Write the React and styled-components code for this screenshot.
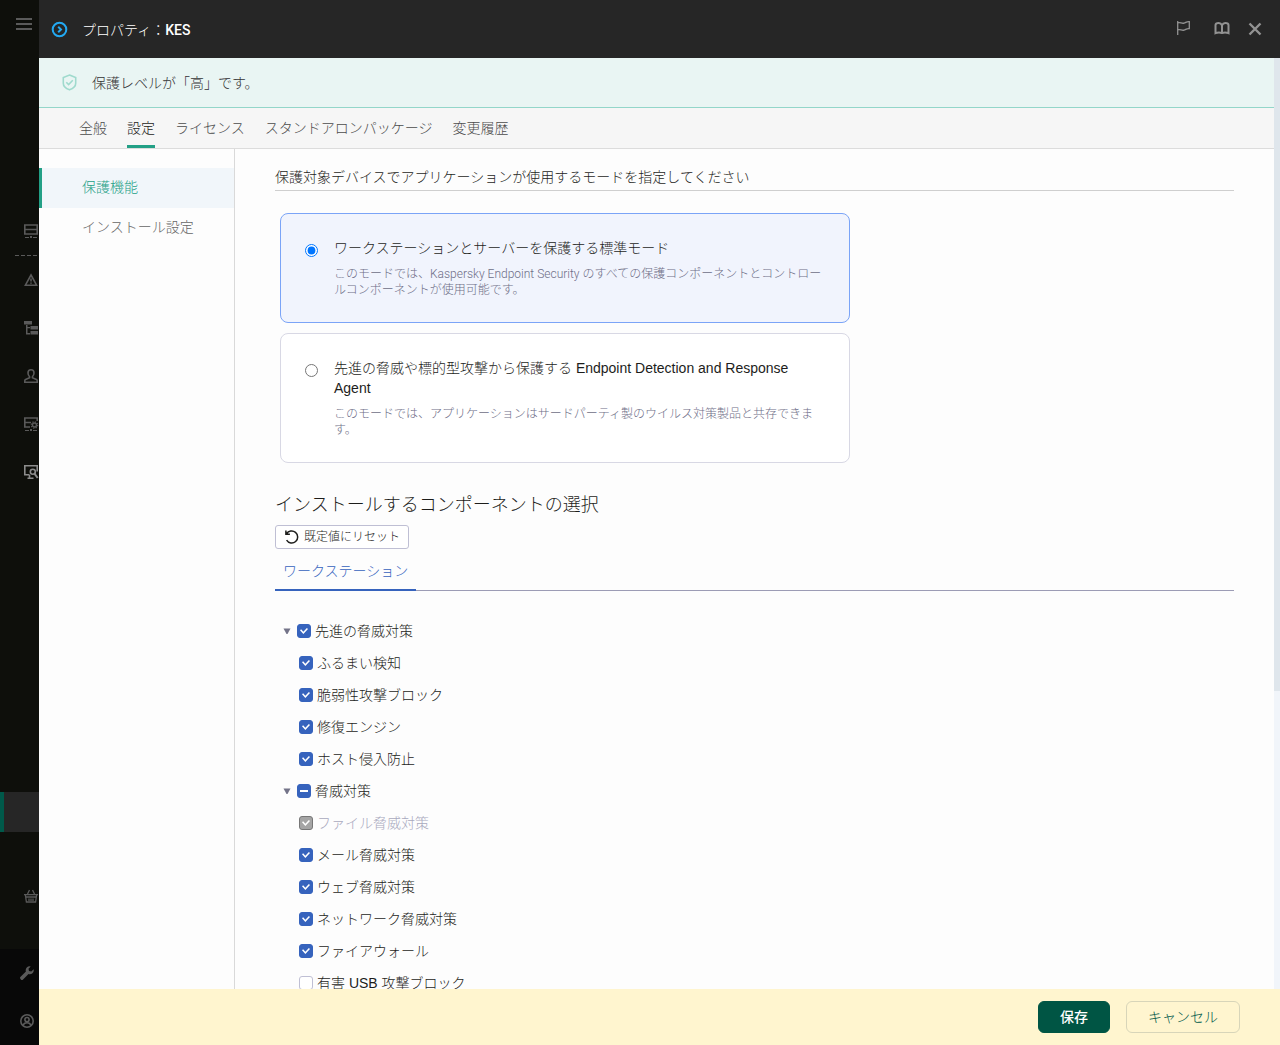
import React, { useEffect, useRef } from 'react';
import styled, { createGlobalStyle, css } from 'styled-components';

const GlobalStyle = createGlobalStyle`
  *, *::before, *::after { box-sizing: border-box; }
  body {
    margin: 0;
    font-family: "Liberation Sans", "Noto Sans CJK JP", sans-serif;
    font-size: 14px;
    font-weight: 300;
    line-height: 20px;
    color: #1d1d1b;
    background: #0d0e0a;
  }
  button, input { font: inherit; margin: 0; }
  h1, h2, p, ul, fieldset { margin: 0; padding: 0; border: 0; font-weight: inherit; }
  ul { list-style: none; }
`;

const Shell = styled.div`
  display: flex;
  height: 100vh;
  overflow: hidden;
`;

const Rail = styled.nav`
  flex: 0 0 39px;
  display: flex;
  flex-direction: column;
  overflow: hidden;
  background: #0e0f0b;
`;

const RailButton = styled.button`
  flex: 0 0 48px;
  display: flex;
  align-items: center;
  padding: 0 0 0 ${(p) => p.$inset || 23}px;
  border: 0;
  background: none;
  color: ${(p) => (p.$bright ? '#8c8c8c' : '#5a5a5a')};
  svg { flex: none; }
`;

const RailGroup = styled.div`
  display: flex;
  flex-direction: column;
  margin-top: ${(p) => p.$top || 0}px;
`;

const Dashes = styled.div`
  height: 1px;
  margin-left: 15px;
  background: repeating-linear-gradient(90deg, #5a5a5a 0 4px, transparent 4px 6px);
`;

const RailActive = styled.div`
  height: 40px;
  margin: 296px 0 40px;
  border-left: 4px solid #00594a;
  background: #262626;
`;

const RailFooter = styled.div`
  display: flex;
  flex-direction: column;
  margin-top: auto;
  background: #080808;
`;

const Panel = styled.div`
  flex: 1;
  min-width: 0;
  display: flex;
  flex-direction: column;
  background: #fdfdfd;
`;

const Header = styled.header`
  flex: 0 0 58px;
  display: flex;
  align-items: center;
  padding: 0 16px 0 12px;
  background: #262626;
  color: #fff;
`;

const Title = styled.h1`
  flex: 1;
  margin-left: 14px;
  padding-top: 2px;
  font-family: Roboto, "Noto Sans CJK JP", sans-serif;
  font-size: 14px;
  font-weight: 300;
  b { font-weight: 500; }
`;

const HeaderActions = styled.div`
  display: flex;
  align-items: center;
  gap: 16px;
`;

const HeaderButton = styled.button`
  display: flex;
  padding: 0;
  border: 0;
  background: none;
  color: #929292;
  &:first-child { margin-right: 7px; }
`;

const Body = styled.div`
  flex: 1;
  min-height: 0;
  display: flex;
`;

const Scroll = styled.div`
  flex: 1;
  min-width: 0;
  overflow-y: auto;
  scrollbar-width: none;
  display: flex;
  flex-direction: column;
`;

const Track = styled.div`
  flex: 0 0 6px;
  background: #f1f5fa;
`;

const Thumb = styled.div`
  height: 68%;
  background: #dfe6ec;
`;

const Banner = styled.div`
  flex: 0 0 50px;
  display: flex;
  align-items: center;
  gap: 14px;
  padding-left: 22px;
  border-bottom: 1px solid #93d6c9;
  background: #e9f5f3;
  color: #333;
`;

const Tabs = styled.div`
  flex: 0 0 41px;
  display: flex;
  gap: 20px;
  padding-left: 40px;
  border-bottom: 1px solid #dcdcdc;
  background: #f6f6f6;
`;

const Tab = styled.button`
  padding: 0;
  border: 0;
  border-bottom: 3px solid ${(p) => (p.$active ? '#23a086' : 'transparent')};
  border-top: 3px solid transparent;
  background: none;
  color: ${(p) => (p.$active ? '#1d1d1b' : '#4c4c4c')};
`;

const Columns = styled.div`
  flex: 1 0 auto;
  display: flex;
`;

const SideNav = styled.nav`
  flex: 0 0 196px;
  padding-top: 19px;
  border-right: 1px solid #d9d9d9;
`;

const SideLink = styled.a`
  display: block;
  padding: 9px 0 11px 40px;
  border-left: 3px solid transparent;
  color: #666;
  text-decoration: none;
  ${(p) => p.$active && css`
    border-left-color: #23a086;
    background: #f1f6fa;
    color: #23a086;
  `}
`;

const Content = styled.main`
  flex: 1;
  min-width: 0;
  padding: 18px 40px 24px;
`;

const Legend = styled.p`
  padding-bottom: 3px;
  border-bottom: 1px solid #cfcfcf;
`;

const Modes = styled.div`
  display: flex;
  flex-direction: column;
  gap: 10px;
  max-width: 570px;
  margin: 22px 0 0 5px;
`;

const ModeCard = styled.label`
  display: flex;
  gap: 16px;
  padding: 24px;
  border: 1px solid ${(p) => (p.$selected ? '#7ba4f7' : '#d8d8e4')};
  border-radius: 8px;
  background: ${(p) => (p.$selected ? '#f1f4fd' : '#fff')};
`;

const Radio = styled.input`
  flex: none;
  width: 13px;
  height: 13px;
  margin-top: 6px;
`;

const ModeText = styled.span`
  display: flex;
  flex-direction: column;
  gap: 8px;
`;

const ModeHint = styled.span`
  font-family: Roboto, "Noto Sans CJK JP", sans-serif;
  font-size: 12px;
  line-height: 16px;
  color: #6e6e87;
`;

const SectionTitle = styled.h2`
  margin-top: 30px;
  font-size: 18px;
  line-height: 24px;
`;

const ResetButton = styled.button`
  display: flex;
  align-items: center;
  gap: 4px;
  height: 24px;
  margin-top: 8px;
  padding: 0 8px;
  border: 1px solid #bfbfd4;
  border-radius: 3px;
  background: #fff;
  color: #1d1d1b;
  font-size: 12px;
`;

const SubTabs = styled.div`
  display: flex;
  height: 42px;
  border-bottom: 1px solid #9c9cb5;
`;

const SubTab = styled.button`
  height: 42px;
  padding: 4px 8px 0;
  border: 0;
  border-bottom: 2px solid #3663bd;
  background: none;
  color: #3663bd;
`;

const Tree = styled.ul`
  padding-top: 24px;
`;

const Row = styled.li`
  display: flex;
  align-items: center;
  height: 32px;
  padding-left: ${(p) => (p.$child ? 24 : 7)}px;
`;

const Toggle = styled.button`
  display: flex;
  width: 10px;
  margin-right: 5px;
  padding: 0;
  border: 0;
  background: none;
  color: #737388;
`;

const CheckLabel = styled.label`
  display: flex;
  align-items: center;
  gap: 4px;
  color: ${(p) => (p.$disabled ? '#a9a9bd' : '#1d1d1b')};
`;

const Check = styled.input`
  appearance: none;
  display: grid;
  place-items: center;
  width: 14px;
  height: 14px;
  border: 1px solid #bfbfd4;
  border-radius: 3px;
  background: #fff;
  &:checked, &:indeterminate { border-color: #3663bd; background: #3663bd; }
  &:disabled { border-color: #777; background: #a5a5a5; }
  &::after {
    content: "";
    width: 8px;
    height: 6px;
  }
  &:checked::after {
    background: #fff;
    clip-path: polygon(0 38%, 14% 20%, 42% 62%, 86% 0, 100% 18%, 42% 100%);
  }
  &:indeterminate::after {
    height: 2px;
    background: #fff;
  }
`;

const Footer = styled.footer`
  flex: 0 0 56px;
  display: flex;
  align-items: center;
  justify-content: flex-end;
  gap: 16px;
  padding-right: 40px;
  background: #fff5cf;
`;

const Action = styled.button`
  height: 32px;
  padding: 0 21px;
  border: 1px solid ${(p) => (p.$primary ? '#005544' : '#d8d5b9')};
  border-radius: 6px;
  background: ${(p) => (p.$primary ? '#005544' : 'transparent')};
  color: ${(p) => (p.$primary ? '#fff' : '#00594a')};
  font-weight: ${(p) => (p.$primary ? 500 : 300)};
`;

const line = { fill: 'none', stroke: 'currentColor', strokeWidth: 1.6 };

const MenuIcon = () => (
  <svg width="16" height="12" viewBox="0 0 16 12" fill="currentColor">
    <path d="M0 0h16v2H0zM0 5h16v2H0zM0 10h16v2H0z" />
  </svg>
);
const ServerIcon = () => (
  <svg width="16" height="16" viewBox="0 0 16 16" {...line}>
    <path d="M1.800 2h12.400v9H1.800zM2 6.500h12" />
    <path d="M2 14.500h4M10 14.500h4" strokeWidth="1" />
    <path d="M7 14h2" strokeWidth="2" />
  </svg>
);
const WarningIcon = () => (
  <svg width="16" height="16" viewBox="0 0 16 16" {...line}>
    <path d="M8 3l5.600 10.200H2.400zM8 6.500v3M8 10.400v1.400" />
  </svg>
);
const TreeIcon = () => (
  <svg width="16" height="16" viewBox="0 0 16 16" fill="currentColor">
    <path d="M1 1h8v3.500H1zM7.500 6H15v3.500H7.500zM7.500 11H15v3.500H7.500zM3 5h1.500v2H7v1.300H4.500V13H7v1.500H3z" />
  </svg>
);
const UserIcon = () => (
  <svg width="16" height="16" viewBox="0 0 16 16" {...line}>
    <path d="M8 1.800c-2 0-3 1.400-3 3.200 0 1.800.8 3 1.600 3.800v1L2.600 11.400c-.6.300-.8.800-.8 1.400v1.400h12.400v-1.400c0-.6-.2-1.100-.8-1.400L9.400 9.800v-1C10.200 8 11 6.800 11 5c0-1.800-1-3.200-3-3.200z" />
  </svg>
);
const ServerGearIcon = () => (
  <svg width="16" height="16" viewBox="0 0 16 16" {...line}>
    <path d="M14.200 5V2H1.800v9H7M2 6.500h6" />
    <circle cx="11.500" cy="9" r="2" strokeWidth="1.400" />
    <circle cx="11.500" cy="9" r="3.200" strokeWidth="1.200" strokeDasharray="1.250 1.250" />
    <path d="M2 14.500h4M10 14.500h4" strokeWidth="1" />
    <path d="M7 14h2" strokeWidth="2" />
  </svg>
);
const MonitorSearchIcon = () => (
  <svg width="16" height="16" viewBox="0 0 16 16" {...line}>
    <path d="M14.200 7.500V1.800H1.800v8.900h4.700M6.500 11v3M4.500 14.200h6" />
    <circle cx="9.800" cy="7.800" r="2.500" />
    <path d="M11.500 9.700l3.200 4.300" strokeWidth="2" />
  </svg>
);
const BasketIcon = () => (
  <svg width="16" height="16" viewBox="0 0 16 16" {...line} strokeWidth="1.300">
    <path d="M1 6.600h14M2.400 7l1 7h9.200l1-7M4.500 6l2-4M11.500 6l-2-4M3 9h10M6 10.500V13M8 10.500V13M10 10.500V13" />
  </svg>
);
const WrenchIcon = () => (
  <svg width="14" height="14" viewBox="0 0 14 14" fill="currentColor">
    <path d="M13.600 3.300L11.300 5.500 9 5 8.500 2.700 10.700.4A4 4 0 0 0 5.900 5.500L.6 10.800a1.600 1.600 0 0 0 0 2.300l.2.300a1.600 1.600 0 0 0 2.300 0l5.400-5.300a4 4 0 0 0 5.100-4.800z" />
  </svg>
);
const AccountIcon = () => (
  <svg width="14" height="14" viewBox="0 0 14 14" {...line}>
    <circle cx="7" cy="7" r="6.200" />
    <circle cx="7" cy="5.600" r="2.100" />
    <path d="M3.200 11.400c.4-1.900 1.800-2.700 3.800-2.700s3.400.8 3.800 2.700" />
  </svg>
);
const ArrowCircleIcon = () => (
  <svg width="17" height="17" viewBox="0 0 17 17" fill="none" stroke="#23a9f2" strokeWidth="2">
    <circle cx="8.500" cy="8.500" r="6.800" />
    <path d="M7.200 5.700L10 8.500l-2.800 2.800" />
  </svg>
);
const FlagIcon = () => (
  <svg width="15" height="18" viewBox="0 0 15 18" fill="none" stroke="currentColor" strokeWidth="1.300">
    <path d="M1.700 1v14M1.700 2.900c2.600-.9 4 .9 6.300.2 2-.6 2.800-1.900 5.300-1.500v7c-2.500-.4-3.300.9-5.300 1.500-2.300.7-3.700-1.100-6.300-.2" />
  </svg>
);
const BookIcon = () => (
  <svg width="16" height="16" viewBox="0 0 16 16" fill="none" stroke="currentColor" strokeWidth="2">
    <path d="M8 12V4.200C7.200 2.600 6.200 2 4.800 2 3 2 1.500 2.600 1.500 4v8.200c2.200-1 4.500-1 6.500-.2 2-.8 4.300-.8 6.500.2V4c0-1.400-1.500-2-3.300-2C9.800 2 8.800 2.600 8 4.200" />
  </svg>
);
const CloseIcon = () => (
  <svg width="18" height="16" viewBox="0 0 18 16" fill="none" stroke="currentColor" strokeWidth="2.400">
    <path d="M3.500 2.500l11 11M14.500 2.500l-11 11" />
  </svg>
);
const ShieldIcon = () => (
  <svg width="17" height="18" viewBox="0 0 17 18" fill="none" stroke="#9fdacd" strokeWidth="1.600">
    <path d="M8.500 1L14.700 3.600v5.700c0 3-2.600 5.300-6.200 6.500-3.600-1.200-6.200-3.500-6.200-6.500V3.600zM5.300 8.300l2.300 2.300 4.200-4.300" />
  </svg>
);
const ResetIcon = () => (
  <svg width="16" height="16" viewBox="0 0 16 16" fill="none" stroke="#1d1d1b" strokeWidth="1.500">
    <path d="M2.500 5A6 6 0 1 1 2.600 11.200M1.900 1.500V5.300h4" />
  </svg>
);
const Triangle = () => (
  <svg width="10" height="8" viewBox="0 0 10 8" fill="currentColor">
    <path d="M1.500 1.500h7L5.500 7h-1z" />
  </svg>
);

const railItems = [
  ['デバイス', WarningIcon],
  ['階層', TreeIcon],
  ['ユーザー', UserIcon],
  ['サーバー設定', ServerGearIcon],
  ['検出', MonitorSearchIcon, true],
];

const modes = [
  {
    title: 'ワークステーションとサーバーを保護する標準モード',
    hint: 'このモードでは、Kaspersky Endpoint Security のすべての保護コンポーネントとコントロールコンポーネントが使用可能です。',
    selected: true,
  },
  {
    title: '先進の脅威や標的型攻撃から保護する Endpoint Detection and Response Agent',
    hint: 'このモードでは、アプリケーションはサードパーティ製のウイルス対策製品と共存できます。',
  },
];

const components = [
  { name: '先進の脅威対策', state: 'on', group: true },
  { name: 'ふるまい検知', state: 'on' },
  { name: '脆弱性攻撃ブロック', state: 'on' },
  { name: '修復エンジン', state: 'on' },
  { name: 'ホスト侵入防止', state: 'on' },
  { name: '脅威対策', state: 'mixed', group: true },
  { name: 'ファイル脅威対策', state: 'on', disabled: true },
  { name: 'メール脅威対策', state: 'on' },
  { name: 'ウェブ脅威対策', state: 'on' },
  { name: 'ネットワーク脅威対策', state: 'on' },
  { name: 'ファイアウォール', state: 'on' },
  { name: '有害 USB 攻撃ブロック', state: 'off' },
];

function ComponentRow({ name, state, group, disabled }) {
  const ref = useRef(null);
  useEffect(() => {
    ref.current.indeterminate = state === 'mixed';
  }, [state]);
  return (
    <Row $child={!group}>
      {group && <Toggle aria-label={name}><Triangle /></Toggle>}
      <CheckLabel $disabled={disabled}>
        <Check ref={ref} type="checkbox" defaultChecked={state === 'on'} disabled={disabled} />
        {name}
      </CheckLabel>
    </Row>
  );
}

export default function App() {
  return (
    <>
      <GlobalStyle />
      <Shell lang="ja">
        <Rail>
          <RailButton $inset={16} aria-label="メニュー"><MenuIcon /></RailButton>
          <RailGroup $top={159}>
            <RailButton aria-label="サーバー"><ServerIcon /></RailButton>
            <Dashes />
            {railItems.map(([label, Icon, bright]) => (
              <RailButton key={label} aria-label={label} $bright={bright}><Icon /></RailButton>
            ))}
          </RailGroup>
          <RailActive />
          <RailButton aria-label="マーケットプレイス"><BasketIcon /></RailButton>
          <RailFooter>
            <RailButton $inset={20} aria-label="ツール"><WrenchIcon /></RailButton>
            <RailButton $inset={20} aria-label="アカウント"><AccountIcon /></RailButton>
          </RailFooter>
        </Rail>
        <Panel>
          <Header>
            <ArrowCircleIcon />
            <Title>プロパティ：<b>KES</b></Title>
            <HeaderActions>
              <HeaderButton aria-label="フラグ"><FlagIcon /></HeaderButton>
              <HeaderButton aria-label="ヘルプ"><BookIcon /></HeaderButton>
              <HeaderButton aria-label="閉じる"><CloseIcon /></HeaderButton>
            </HeaderActions>
          </Header>
          <Body>
            <Scroll>
              <Banner><ShieldIcon />保護レベルが「高」です。</Banner>
              <Tabs>
                <Tab>全般</Tab>
                <Tab $active>設定</Tab>
                <Tab>ライセンス</Tab>
                <Tab>スタンドアロンパッケージ</Tab>
                <Tab>変更履歴</Tab>
              </Tabs>
              <Columns>
                <SideNav>
                  <SideLink href="#protection" $active>保護機能</SideLink>
                  <SideLink href="#install">インストール設定</SideLink>
                </SideNav>
                <Content>
                  <Legend>保護対象デバイスでアプリケーションが使用するモードを指定してください</Legend>
                  <Modes>
                    {modes.map((mode) => (
                      <ModeCard key={mode.title} $selected={mode.selected}>
                        <Radio type="radio" name="mode" defaultChecked={mode.selected} />
                        <ModeText>
                          <span>{mode.title}</span>
                          <ModeHint>{mode.hint}</ModeHint>
                        </ModeText>
                      </ModeCard>
                    ))}
                  </Modes>
                  <SectionTitle>インストールするコンポーネントの選択</SectionTitle>
                  <ResetButton><ResetIcon />既定値にリセット</ResetButton>
                  <SubTabs>
                    <SubTab>ワークステーション</SubTab>
                  </SubTabs>
                  <Tree>
                    {components.map((item) => <ComponentRow key={item.name} {...item} />)}
                  </Tree>
                </Content>
              </Columns>
            </Scroll>
            <Track><Thumb /></Track>
          </Body>
          <Footer>
            <Action $primary>保存</Action>
            <Action>キャンセル</Action>
          </Footer>
        </Panel>
      </Shell>
    </>
  );
}
